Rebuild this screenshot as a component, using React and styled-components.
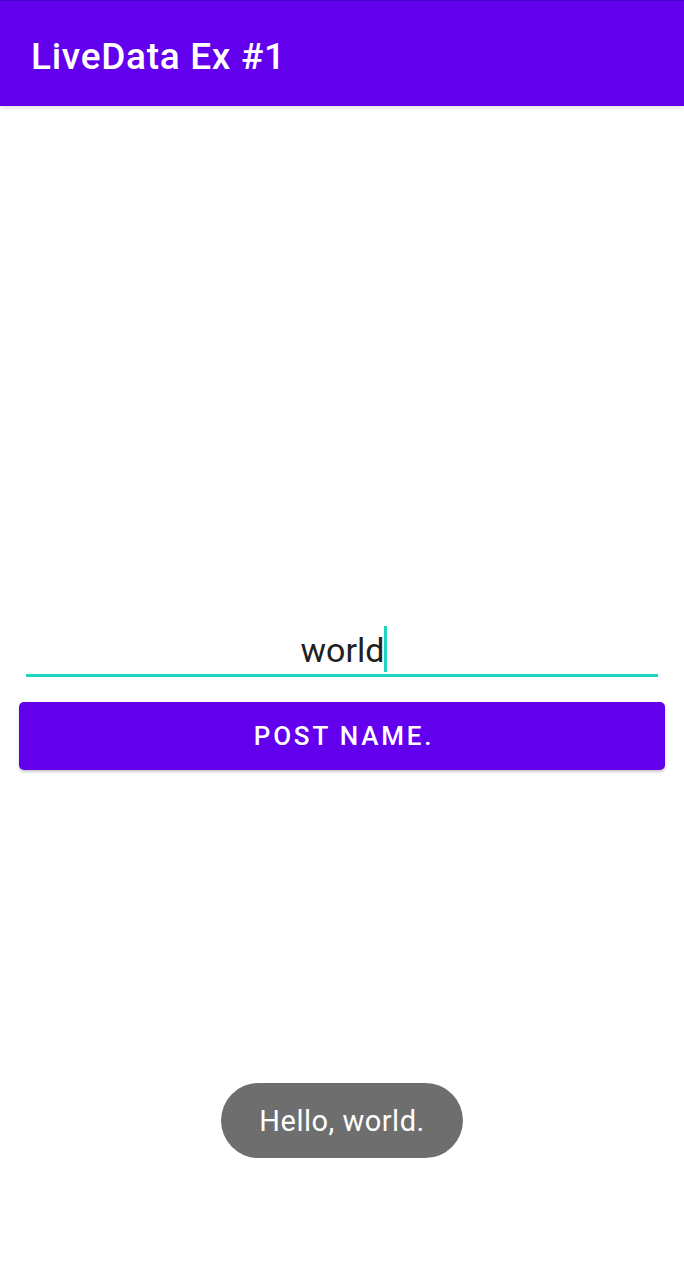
import React from "react";
import styled, { createGlobalStyle } from "styled-components";

const Global = createGlobalStyle`
  html, body { margin: 0; padding: 0; background: #ffffff; }
  body { font-family: Roboto, "Noto Sans", sans-serif; }
  #root { width: 684px; height: 1280px; }
`;

const Screen = styled.div`
  position: relative;
  width: 684px;
  height: 1280px;
  display: flex;
  flex-direction: column;
  background: #ffffff;
  overflow: hidden;
`;

const AppBar = styled.header`
  height: 106px;
  flex: 0 0 106px;
  background: #6200ee;
  border-top: 1px solid #4a00c4;
  box-sizing: border-box;
  display: flex;
  align-items: center;
  padding-left: 31px;
  padding-top: 5px;
  box-shadow: 0 2px 5px rgba(0, 0, 0, 0.12);
  z-index: 1;
`;

const Title = styled.h1`
  margin: 0;
  color: #ffffff;
  font-family: Roboto, sans-serif;
  font-weight: 500;
  font-size: 37px;
  letter-spacing: 0.7px;
`;

const Content = styled.main`
  flex: 1;
  display: flex;
  flex-direction: column;
  justify-content: center;
  padding: 0 19px 0 19px;
  gap: 25px;
`;

const Field = styled.div`
  margin: 0 7px;
  height: 54px;
  border-bottom: 3px solid #1fd3bf;
  display: flex;
  justify-content: center;
  align-items: flex-end;
  padding-bottom: 4px;
  box-sizing: content-box;
`;

const FieldText = styled.span`
  position: relative;
  font-family: Roboto, sans-serif;
  font-size: 34px;
  line-height: 40px;
  color: #212121;
  margin-left: 1px;
`;

const Cursor = styled.span`
  position: absolute;
  right: -3px;
  top: -4px;
  width: 3px;
  height: 46px;
  background: #1fd3bf;
`;

const Button = styled.button`
  height: 68px;
  border: none;
  border-radius: 5px;
  background: #6200ee;
  color: #ffffff;
  font-family: Roboto, sans-serif;
  font-weight: 500;
  font-size: 26px;
  letter-spacing: 2.8px;
  text-indent: 4px;
  text-transform: uppercase;
  box-shadow: 0 2px 3px rgba(0, 0, 0, 0.22);
  padding: 0;
`;

const Toast = styled.div`
  position: absolute;
  left: 221px;
  width: 242px;
  bottom: 122px;
  height: 75px;
  border-radius: 38px;
  background: #6e6e6e;
  color: #ffffff;
  display: flex;
  align-items: center;
  justify-content: center;
  font-family: Roboto, sans-serif;
  font-size: 29px;
  letter-spacing: 0.5px;
`;

export default function App() {
  return (
    <>
      <Global />
      <Screen>
        <AppBar>
          <Title>LiveData Ex #1</Title>
        </AppBar>
        <Content>
          <Field>
            <FieldText>
              world
              <Cursor />
            </FieldText>
          </Field>
          <Button>Post name.</Button>
        </Content>
        <Toast>Hello, world.</Toast>
      </Screen>
    </>
  );
}
